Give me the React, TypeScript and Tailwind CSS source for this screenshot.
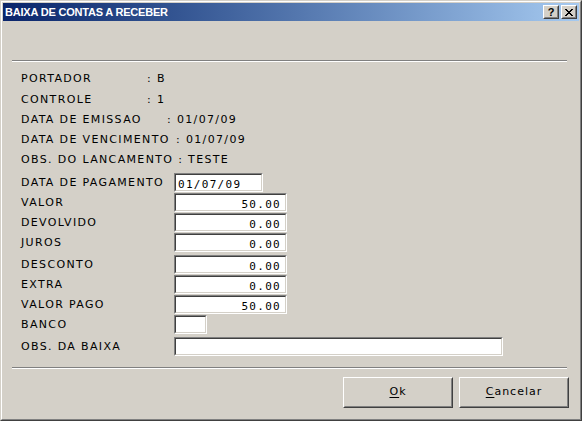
import React from "react";

const lbl = "font-['DejaVu_Sans',sans-serif] text-[11px] tracking-[1.35px] text-black whitespace-nowrap";

function Sunken({ w, value, right }: { w: string; value?: string; right?: boolean }) {
  return (
    <div className={`${w} h-[19px] border border-t-[#808080] border-l-[#808080] border-r-white border-b-white`}>
      <div
        className={`h-full border border-t-[#404040] border-l-[#404040] border-r-[#d4d0c8] border-b-[#d4d0c8] bg-white flex items-center ${
          right ? "justify-end pr-[4px]" : "justify-start pl-[2px]"
        }`}
      >
        <span className="font-['DejaVu_Sans_Mono',monospace] text-[11px] tracking-[1.3px] leading-[19px] pt-[3px] text-black">
          {value}
        </span>
      </div>
    </div>
  );
}

function Field({ label, w, value, right, mt }: { label: string; w: string; value?: string; right?: boolean; mt: string }) {
  return (
    <div className={`flex items-start h-[19px] ${mt}`}>
      <div className={`w-[153px] leading-[19px] ${lbl}`}>{label}</div>
      <Sunken w={w} value={value} right={right} />
    </div>
  );
}

function Info({ label, minw, value, gap }: { label: string; minw: string; value: string; gap?: string }) {
  return (
    <div className={`flex h-[20px] leading-[20px] ${gap ?? ""}`}>
      <span className={`${minw} ${lbl}`}>{label}</span>
      <span className={lbl}>{": " + value}</span>
    </div>
  );
}

function Btn({ children }: { children: React.ReactNode }) {
  return (
    <div className="w-[110px] h-[31px] border border-t-white border-l-white border-r-[#404040] border-b-[#404040]">
      <div className="h-full border border-t-[#d4d0c8] border-l-[#d4d0c8] border-r-[#808080] border-b-[#808080] flex items-center justify-center">
        <span className="font-['DejaVu_Sans',sans-serif] text-[11px] tracking-[1px] text-black">{children}</span>
      </div>
    </div>
  );
}

function TitleBtn({ children }: { children: React.ReactNode }) {
  return (
    <div className="w-[16px] h-[14px] bg-[#d4d0c8] border border-t-white border-l-white border-r-[#404040] border-b-[#404040]">
      <div className="h-full border border-t-[#d4d0c8] border-l-[#d4d0c8] border-r-[#808080] border-b-[#808080] flex items-center justify-center">
        {children}
      </div>
    </div>
  );
}

export default function App() {
  return (
    <div className="w-[582px] h-[421px] bg-[#d4d0c8] border border-t-[#d4d0c8] border-l-[#d4d0c8] border-r-[#404040] border-b-[#404040]">
      <div className="h-full border border-t-white border-l-white border-r-[#808080] border-b-[#808080] p-[1px] flex flex-col">
        {/* Title bar */}
        <div className="h-[18px] bg-gradient-to-r from-[#0a246a] to-[#a6caf0] flex items-center justify-between pl-[2px] pr-[2px]">
          <span className="font-['Liberation_Sans',sans-serif] font-bold text-[11px] tracking-[-0.2px] text-white leading-[18px]">
            BAIXA DE CONTAS A RECEBER
          </span>
          <div className="flex gap-[2px]">
            <TitleBtn>
              <span className="font-['Liberation_Sans',sans-serif] font-bold text-[11px] leading-[10px] text-black">?</span>
            </TitleBtn>
            <TitleBtn>
              <svg width="8" height="7" viewBox="0 0 8 7" shapeRendering="crispEdges">
                <path d="M0 0h2v1H0zM6 0h2v1H6zM1 1h2v1H1zM5 1h2v1H5zM2 2h4v1H2zM3 3h2v1H3zM2 4h4v1H2zM1 5h2v1H1zM5 5h2v1H5zM0 6h2v1H0zM6 6h2v1H6z" fill="#000" />
              </svg>
            </TitleBtn>
          </div>
        </div>

        {/* Body */}
        <div className="flex-1 flex flex-col">
          <div className="mt-[39px] ml-[9px] w-[555px] border-t border-b border-t-[#808080] border-b-white" />

          <div className="pl-[18px] mt-[7px] flex flex-col">
            <Info label="PORTADOR" minw="min-w-[126px]" value="B" />
            <Info label="CONTROLE" minw="min-w-[126px]" value="1" gap="mt-[1px]" />
            <Info label="DATA DE EMISSAO" minw="min-w-[146px]" value="01/07/09" />
            <Info label={"DATA DE VENCIMENTO\u00a0"} minw="min-w-[155px]" value="01/07/09" />
            <Info label={"OBS. DO LANCAMENTO\u00a0"} minw="min-w-[155px]" value="TESTE" />

            <Field label="DATA DE PAGAMENTO" w="w-[89px]" value="01/07/09" mt="mt-[3px]" />
            <Field label="VALOR" w="w-[113px]" value="50.00" right mt="mt-[1px]" />
            <Field label="DEVOLVIDO" w="w-[113px]" value="0.00" right mt="mt-[1px]" />
            <Field label="JUROS" w="w-[113px]" value="0.00" right mt="mt-[1px]" />
            <Field label="DESCONTO" w="w-[113px]" value="0.00" right mt="mt-[3px]" />
            <Field label="EXTRA" w="w-[113px]" value="0.00" right mt="mt-[1px]" />
            <Field label="VALOR PAGO" w="w-[113px]" value="50.00" right mt="mt-[1px]" />
            <Field label="BANCO" w="w-[33px]" mt="mt-[1px]" />
            <Field label="OBS. DA BAIXA" w="w-[329px]" mt="mt-[3px]" />
          </div>

          <div className="mt-[11px] ml-[9px] w-[555px] border-t border-b border-t-[#808080] border-b-white" />

          <div className="mt-[8px] flex justify-end gap-[6px] pr-[10px]">
            <Btn>
              <span className="underline underline-offset-2">O</span>k
            </Btn>
            <Btn>
              <span className="underline underline-offset-2">C</span>ancelar
            </Btn>
          </div>
        </div>
      </div>
    </div>
  );
}
